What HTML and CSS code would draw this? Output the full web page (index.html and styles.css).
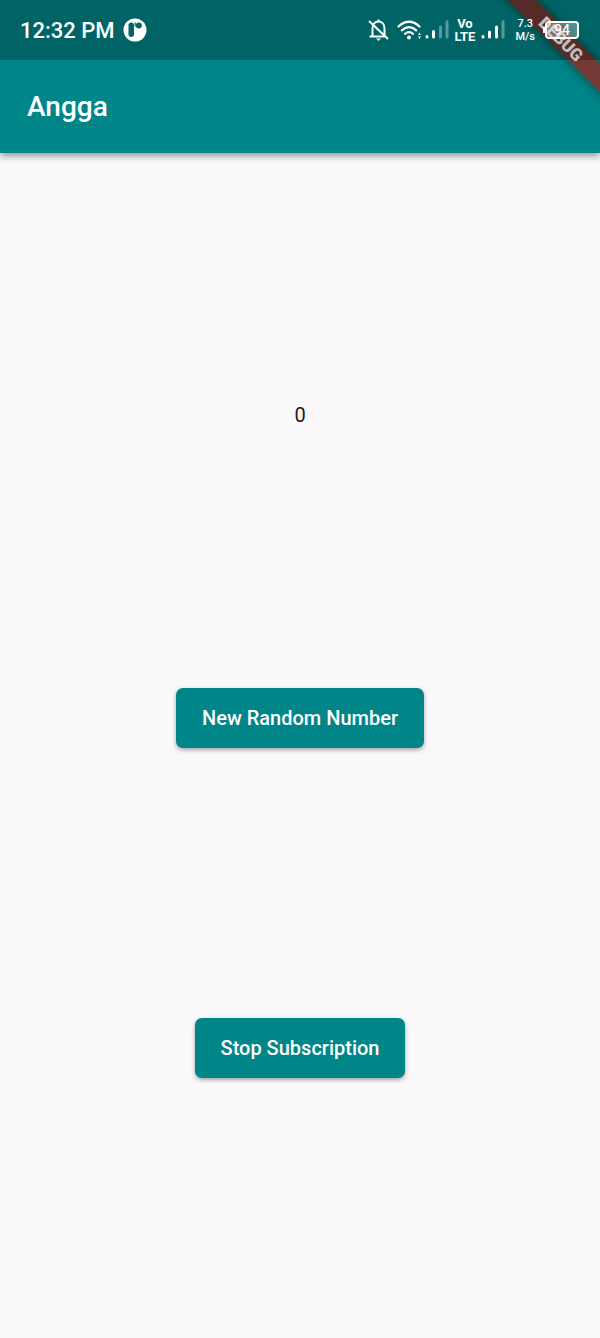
FILE: index.html
```
<!DOCTYPE html>
<html lang="en">
<head>
<meta charset="utf-8">
<meta name="viewport" content="width=device-width, initial-scale=1">
<title>Angga</title>
<link rel="stylesheet" href="styles.css">
</head>
<body>
<div class="app">
  <header class="top">
    <div class="banner-clip"><div class="banner">DEBUG</div></div>
    <div class="status">
      <span class="clock">12:32 PM</span>
      <svg class="notice" width="24" height="24" viewBox="0 0 24 24"><circle cx="12" cy="12" r="11.5" fill="#fff"/><rect x="5.500" y="4.500" width="5.500" height="14.500" rx="2.700" fill="#006568"/><path d="M12.200 4.500v4" stroke="#006568" stroke-width="1.200"/><circle cx="15.800" cy="7.500" r="3" fill="#006568"/></svg>
      <div class="icons">
        <svg width="22" height="24" viewBox="0 0 22 24" fill="none" stroke="#fff" stroke-width="2"><path d="M1.500 18.500h17M4.500 18.500V10.500c0-4 2.500-7 6-7s6 3 6 7V18M1 3l19 18"/><path d="M8 20.500h5l-2.500 2.500z" fill="#fff" stroke="none"/><path d="M10.500 1.500v2"/></svg>
        <svg class="wifi" width="25" height="24" viewBox="0 0 25 24" fill="none" stroke="#fff" stroke-width="2.200" stroke-linecap="round"><path d="M1.500 8.500Q12 -1 22.500 8.500M4.800 12.300Q12 6 19.200 12.300M8 15.800Q12 12.500 16 15.800"/><circle cx="12" cy="19.500" r="2" fill="#fff" stroke="none"/><path d="M21 17h3l-1.500-2.500zM21 18.500h3l-1.500 2.500z" fill="#fff" stroke="none"/></svg>
        <svg class="signal" width="24" height="24" viewBox="0 0 24 24" stroke="#fff" stroke-width="3" stroke-linecap="round"><path d="M2 18.500v.5M8.500 13.500V19"/><path d="M15.500 9v10M22 3.500V19" opacity=".35"/></svg>
        <span class="lte"><span>Vo</span><span>LTE</span></span>
        <svg class="signal" width="24" height="24" viewBox="0 0 24 24" stroke="#fff" stroke-width="3" stroke-linecap="round"><path d="M2 18.500v.5M8.500 14V19M15.500 9v10"/><path d="M22 3.500V19" opacity=".35"/></svg>
        <span class="speed"><span>7.3</span><span>M/s</span></span>
        <span class="battery">94</span>
      </div>
    </div>
    <h1 class="title">Angga</h1>
  </header>
  <main class="content">
    <output class="value">0</output>
    <button class="btn" type="button">New Random Number</button>
    <button class="btn" type="button">Stop Subscription</button>
  </main>
</div>
</body>
</html>
```
FILE: styles.css
```
* { box-sizing: border-box; }

body {
  margin: 0;
  background: #faf8fb;
  font-family: Roboto, sans-serif;
}

.app {
  display: flex;
  flex-direction: column;
  min-height: 100vh;
}

.top {
  position: relative;
  background: #008588;
  color: #fff;
  box-shadow: 0 3px 7px rgba(0, 0, 0, .4);
}

.status {
  position: relative;
  display: flex;
  align-items: center;
  height: 60px;
  padding: 0 21px 0 20px;
  background: rgba(0, 0, 0, .25);
}

.clock {
  font-size: 22px;
  font-weight: 500;
}

.notice { margin-left: 8px; }

.icons {
  display: flex;
  align-items: center;
  margin-left: auto;
}

.wifi { margin-left: 7px; }

.signal { margin-left: 3px; }

.lte,
.speed {
  display: flex;
  flex-direction: column;
  align-items: center;
  font-weight: 500;
}

.lte {
  margin: 0 3px 0 5px;
  font-size: 13px;
  font-weight: 700;
  line-height: 13px;
}

.speed {
  margin-left: 10px;
  font-size: 11px;
  line-height: 13px;
}

.battery {
  position: relative;
  width: 34px;
  height: 18px;
  margin-left: 10px;
  border: 2px solid #fff;
  border-radius: 4px;
  background: rgba(255, 255, 255, .3);
  font-size: 14px;
  font-weight: 500;
  line-height: 14px;
  text-align: center;
}

.battery::before {
  content: "";
  position: absolute;
  left: -4px;
  top: 4px;
  width: 2px;
  height: 6px;
  background: #fff;
}

.title {
  margin: 0;
  padding: 1px 27px 0;
  font-size: 28px;
  font-weight: 500;
  line-height: 92px;
}

.banner-clip {
  position: absolute;
  top: 0;
  right: 0;
  width: 120px;
  height: 120px;
  overflow: hidden;
}

.banner {
  position: absolute;
  top: 29px;
  right: -61px;
  width: 200px;
  background: rgba(160, 28, 20, .72);
  box-shadow: 0 0 10px rgba(0, 0, 0, .5);
  color: #fff;
  font-size: 17px;
  font-weight: 900;
  line-height: 20px;
  text-align: center;
  transform: rotate(45deg);
}

.content {
  flex: 1;
  display: flex;
  flex-direction: column;
  align-items: center;
  justify-content: space-evenly;
}

.value {
  color: #1c1c1c;
  font-size: 20px;
  line-height: 24px;
}

.btn {
  height: 60px;
  margin: 10px 0;
  padding: 0 26px;
  border: 0;
  border-radius: 7px;
  background: #008588;
  box-shadow: 0 2px 4px rgba(0, 0, 0, .35);
  color: #fff;
  font: 500 20px Roboto, sans-serif;
}
```
